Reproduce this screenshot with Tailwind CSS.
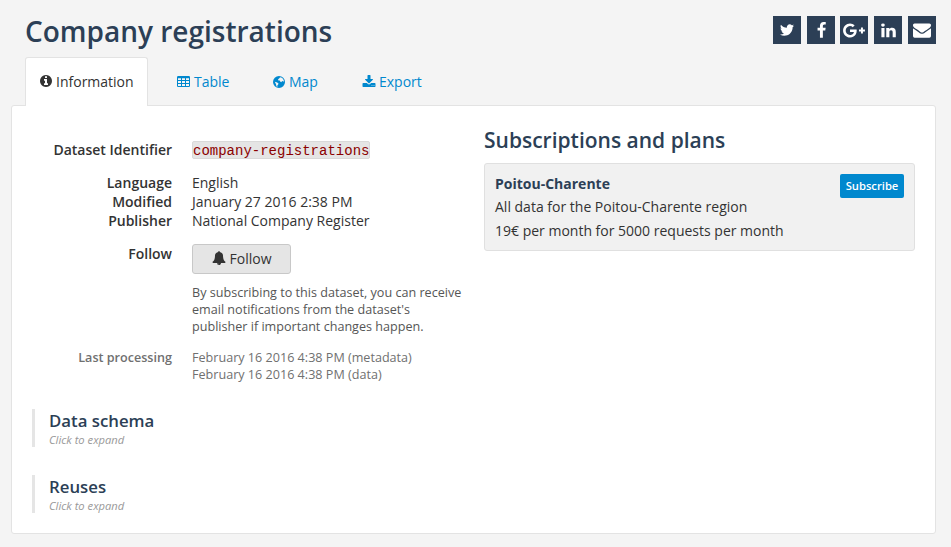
<!DOCTYPE html>
<html lang="en">
<head>
<meta charset="utf-8">
<title>Company registrations</title>
<script src="https://cdn.jsdelivr.net/npm/@tailwindcss/browser@4"></script>
</head>
<body class="h-[547px] overflow-hidden bg-[#f4f4f4] pl-[11px] pr-[15px] font-['Open_Sans',sans-serif] text-[14px] leading-[19px] text-[#333]">
<header class="flex h-[57px] justify-between pl-[14px]">
  <h1 class="pt-[12px] text-[28px] leading-[38px] font-semibold text-[#2c3f56]">Company registrations</h1>
  <div class="flex gap-[6px] pt-[16px]">
    <a class="flex size-[28px] items-center justify-center bg-[#2c3f56] text-white"><svg class="size-[16px]" viewBox="0 0 1792 1792" fill="currentColor"><path d="M1684 408q-67 98-162 167 1 14 1 42 0 130-38 259.5t-115.5 248.5-184.5 210.5-258 146-323 54.5q-271 0-496-145 35 4 78 4 225 0 401-138-105-2-188-64.5t-114-159.5q33 5 61 5 43 0 85-11-112-23-185.5-111.5t-73.5-205.5v-4q68 38 146 41-66-44-105-115t-39-154q0-88 44-163 121 149 294.5 238.5t371.5 99.5q-8-38-8-74 0-134 94.5-228.5t228.5-94.5q140 0 236 102 109-21 205-78-37 115-142 178 93-10 186-50z"/></svg></a>
    <a class="-mr-px flex size-[28px] items-center justify-center bg-[#2c3f56] text-white"><svg class="size-[17px]" viewBox="0 0 1792 1792" fill="currentColor"><path d="M1343 12v264h-157q-86 0-116 36t-30 108v189h293l-39 296h-254v759h-306v-759h-255v-296h255v-218q0-186 104-288.5t277-102.5q147 0 228 12z"/></svg></a>
    <a class="flex size-[28px] items-center justify-center bg-[#2c3f56] text-white"><svg class="h-[17px] w-[22px]" viewBox="0 0 2304 1792" fill="currentColor"><path d="M1437 913q0 208-87 370.5t-248 254-369 91.5q-149 0-285-58t-234-156-156-234-58-285 58-285 156-234 234-156 285-58q286 0 491 192l-199 191q-117-113-292-113-123 0-227.5 62t-165.5 168.5-61 232.5 61 232.5 165.5 168.5 227.5 62q83 0 152.5-23t114.5-57.5 78.5-78.5 49-83 21.500-74h-416v-252h692q12 63 12 122zm867-122v210h-209v209h-210v-209h-209v-210h209v-209h210v209h209z"/></svg></a>
    <a class="flex size-[28px] items-center justify-center bg-[#2c3f56] text-white"><svg class="size-[17px]" viewBox="0 0 1792 1792" fill="currentColor"><path d="M477 625v991h-330v-991h330zm21-306q1 73-50.5 122t-135.5 49h-2q-82 0-132-49t-50-122q0-74 51.500-122.500t134.500-48.500 133 48.500 51 122.500zm1166 729v568h-329v-530q0-105-40.500-164.500t-126.500-59.500q-63 0-105.500 34.500t-63.500 85.500q-11 30-11 81v553h-329q2-399 2-647t-1-296l-1-48h329v144h-2q20-32 41-56t56.500-52 87-43.500 114.500-15.500q171 0 275 113.500t104 332.500z"/></svg></a>
    <a class="flex size-[28px] items-center justify-center bg-[#2c3f56] text-white"><svg class="size-[18px]" viewBox="0 0 1792 1792" fill="currentColor"><path d="M1792 710v794q0 66-47 113t-113 47h-1472q-66 0-113-47t-47-113v-794q44 49 101 87 362 246 497 345 57 42 92.500 65.500t94.500 48 110 24.500h2q51 0 110-24.500t94.500-48 92.500-65.500q170-123 498-345 57-39 100-87zm0-294q0 79-49 151t-122 123q-376 261-468 325-10 7-42.500 31t-54 38.500-52 32.500-57.500 27-50 9h-2q-23 0-50-9t-57.500-27-52-32.500-54-38.500-42.500-31q-91-64-262-182.500t-205-142.500q-62-42-117-115.500t-55-136.500q0-78 41.500-130t118.500-52h1472q65 0 112.500 47t47.500 113z"/></svg></a>
  </div>
</header>
<nav class="relative z-10 -mb-px flex h-[49px] pl-[14px] text-[#0088ce]">
  <a class="flex w-[123px] items-center gap-[3px] rounded-t-[3px] border border-b-0 border-[#e3e3e3] bg-white pb-[2px] pl-[13px] text-[#333]"><svg class="size-[14px]" viewBox="0 0 1792 1792" fill="currentColor"><path d="M1152 1376v-160q0-14-9-23t-23-9h-96v-512q0-14-9-23t-23-9h-320q-14 0-23 9t-9 23v160q0 14 9 23t23 9h96v320h-96q-14 0-23 9t-9 23v160q0 14 9 23t23 9h448q14 0 23-9t9-23zm-128-896v-160q0-14-9-23t-23-9h-192q-14 0-23 9t-9 23v160q0 14 9 23t23 9h192q14 0 23-9t9-23zm640 416q0 209-103 385.500t-279.500 279.500-385.500 103-385.500-103-279.500-279.500-103-385.500 103-385.500 279.500-279.500 385.500-103 385.500 103 279.500 279.500 103 385.500z"/></svg>Information</a>
  <a class="ml-[29px] flex w-[53px] items-center gap-[4px]"><svg class="h-[14px] w-[13px] shrink-0" viewBox="0 0 13 14" fill="currentColor" fill-rule="evenodd"><path d="M1.200 1h10.600q1.200 0 1.200 1.200v8.600q0 1.200-1.200 1.200H1.200Q0 12 0 10.800V2.200Q0 1 1.200 1zM1 3.200v1.900h3V3.200zm4 0v1.900h3V3.200zm4 0v1.900h3V3.200zM1 6v2h3V6zm4 0v2h3V6zm4 0v2h3V6zM1 9v2h3V9zm4 0v2h3V9zm4 0v2h3V9z"/></svg>Table</a>
  <a class="ml-[43px] flex w-[46px] items-center gap-[4px]"><svg class="size-[12px] shrink-0" viewBox="0 0 12 12" fill="currentColor" fill-rule="evenodd"><path d="M6 0a6 6 0 1 1 0 12A6 6 0 0 1 6 0zM5.800 1 7.300 1.500 6 2.500 5 3.400 5.400 4.600 6.800 4.400 7.200 5.400 8.200 6.300 9 5.200 10.200 5 10.900 6.200 10.900 4.800 10 2.800 8.300 1.400zM1.800 5.800 3.600 6.200 5.400 7.300 5.200 8.600 4.300 9.600 4.400 10.900 3.400 10.200 3 8.300z"/></svg>Map</a>
  <a class="ml-[43px] flex items-center gap-[3px]"><svg class="size-[14px] shrink-0" viewBox="0 0 1792 1792" fill="currentColor"><path d="M1344 1344q0-26-19-45t-45-19-45 19-19 45 19 45 45 19 45-19 19-45zm256 0q0-26-19-45t-45-19-45 19-19 45 19 45 45 19 45-19 19-45zm128-224v320q0 40-28 68t-68 28h-1472q-40 0-68-28t-28-68v-320q0-40 28-68t68-28h465l135 136q58 56 136 56t136-56l136-136h464q40 0 68 28t28 68zm-325-569q17 41-14 70l-448 448q-18 19-45 19t-45-19l-448-448q-31-29-14-70 17-39 59-39h256v-448q0-26 19-45t45-19h256q26 0 45 19t19 45v448h256q42 0 59 39z"/></svg>Export</a>
</nav>
<main class="flex h-[429px] rounded-[3px] border border-[#e3e3e3] bg-white">
  <section class="w-[472px] pt-[34px]">
    <dl class="grid grid-cols-[160px_1fr] gap-x-[20px]">
      <dt class="text-right font-semibold">Dataset Identifier</dt>
      <dd class="h-[33px] pt-px"><code class="block h-[18px] w-[178px] rounded-[2px] border border-[#d9d9d9] bg-[#e5e5e5] font-['Courier_New','Liberation_Mono',monospace] text-[14px] leading-[18px] whitespace-nowrap text-[#8b0000]">company-registrations</code></dd>
      <dt class="text-right font-semibold">Language</dt><dd>English</dd>
      <dt class="text-right font-semibold">Modified</dt><dd>January 27 2016 2:38 PM</dd>
      <dt class="text-right font-semibold">Publisher</dt><dd>National Company Register</dd>
      <dt class="pt-[14px] text-right font-semibold">Follow</dt>
      <dd class="pt-[14px]">
        <button class="flex h-[30px] w-[99px] items-center justify-center gap-[4px] rounded-[3px] border border-[#c8c8c8] bg-[#e5e5e5] pb-[2px]"><svg class="size-[14px]" viewBox="0 0 1792 1792" fill="currentColor"><path d="M912 1696q0-16-16-16-59 0-101.500-42.500t-42.500-101.500q0-16-16-16t-16 16q0 73 51.500 124.500t124.500 51.500q16 0 16-16zm816-288q0 52-38 90t-90 38h-448q0 106-75 181t-181 75-181-75-75-181h-448q-52 0-90-38t-38-90q50-42 91-88t85-119.500 74.500-158.500 50-206 19.500-260q0-152 117-282.500t307-158.500q-8-19-8-39 0-40 28-68t68-28 68 28 28 68q0 20-8 39 190 28 307 158.500t117 282.500q0 139 19.500 260t50 206 74.500 158.500 85 119.500 91 88z"/></svg>Follow</button>
        <p class="mt-[10px] text-[12.6px] leading-[17px] text-[#565656]">By subscribing to this dataset, you can receive<br>email notifications from the dataset's<br>publisher if important changes happen.</p>
      </dd>
      <dt class="pt-[14px] text-right text-[12.6px] leading-[17px] font-semibold text-[#707070]">Last processing</dt>
      <dd class="pt-[14px] text-[12.6px] leading-[17px] text-[#707070]">February 16 2016 4:38 PM (metadata)<br>February 16 2016 4:38 PM (data)</dd>
    </dl>
    <div class="mt-[26px] ml-[20px] h-[38px] border-l-[3px] border-[#e5e5e5] pl-[14px]">
      <h3 class="text-[16.8px] leading-[23px] font-semibold text-[#2c3f56]">Data schema</h3>
      <p class="text-[11.2px] leading-[15px] text-[#999] italic">Click to expand</p>
    </div>
    <div class="mt-[28px] ml-[20px] h-[38px] border-l-[3px] border-[#e5e5e5] pl-[14px]">
      <h3 class="text-[16.8px] leading-[23px] font-semibold text-[#2c3f56]">Reuses</h3>
      <p class="text-[11.2px] leading-[15px] text-[#999] italic">Click to expand</p>
    </div>
  </section>
  <section class="w-[431px] pt-[20px]">
    <h2 class="text-[21px] leading-[29px] font-semibold text-[#2c3f56]">Subscriptions and plans</h2>
    <article class="mt-[8px] flex h-[88px] justify-between rounded-[3px] border border-[#e0e0e0] bg-[#f1f1f1] px-[10px] pt-[10px]">
      <div>
        <h4 class="leading-[19px] font-bold text-[#2c3f56]">Poitou-Charente</h4>
        <p class="mt-[4px]">All data for the Poitou-Charente region</p>
        <p class="mt-[5px]">19€ per month for 5000 requests per month</p>
      </div>
      <button class="h-[24px] w-[64px] rounded-[2px] bg-[#0088ce] pb-[2px] text-[11.2px] font-semibold text-white">Subscribe</button>
    </article>
  </section>
</main>
</body>
</html>
